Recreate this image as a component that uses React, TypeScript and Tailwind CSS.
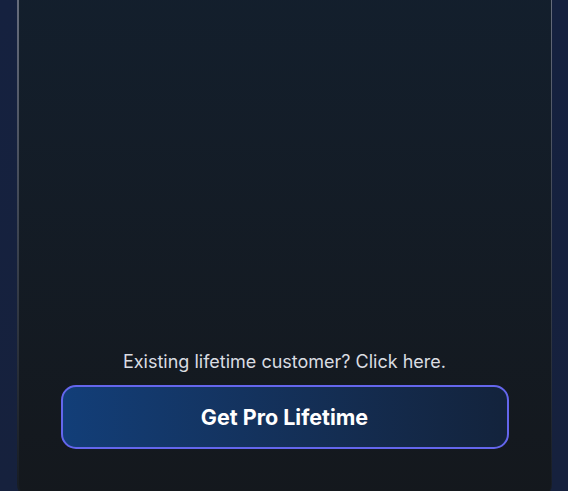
export default function App() {
    return (
        <div className="h-[491px] w-full bg-gradient-to-b from-[#15213f] to-[#16213d] pl-[17px] pr-[16px] overflow-hidden" style={{ fontFamily: "Inter, 'Noto Sans', sans-serif" }}>
            {/* Card with fading side border */}
            <div className="h-[520px] -mt-[20px] rounded-b-2xl bg-gradient-to-b from-[#6a7080] via-[#3c4350] to-[#161b22] px-[1.5px]">
                <div className="h-full rounded-b-2xl bg-gradient-to-b from-[#131f2d] to-[#14181d] flex flex-col items-center justify-end pb-[51px]">
                    <p className="text-[18px] leading-6 text-[#dadde2]">
                        Existing lifetime customer? Click here.
                    </p>
                    <button className="mt-[11px] w-[448px] h-[64px] rounded-[15px] border-2 border-[#6466ec] bg-gradient-to-r from-[#123e78] to-[#13233c] text-white text-[21.5px] font-bold">
                        Get Pro Lifetime
                    </button>
                </div>
            </div>
        </div>
    );
}
